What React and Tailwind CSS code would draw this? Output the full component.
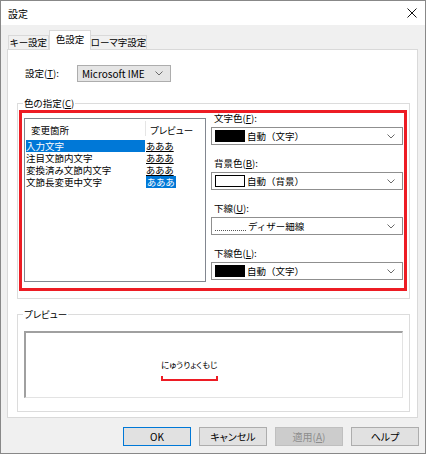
import React from 'react';

function Chevron() {
  return (
    <svg width="8" height="5" viewBox="0 0 8 5" className="shrink-0">
      <path d="M0.5 0.5 L4 4 L7.5 0.5" fill="none" stroke="#6a6a6a" strokeWidth="1" />
    </svg>
  );
}

function Key({ children }) {
  return <span className="underline underline-offset-1">{children}</span>;
}

function ColorField({ label, hotkey, swatch, text, first }) {
  return (
    <div className={first ? '' : 'mt-[13px]'}>
      <div className="h-[11px] pl-[3px] leading-[11px]">
        {label}(<Key>{hotkey}</Key>):
      </div>
      <div className="mt-[3px] flex h-[18px] items-center border border-[#8f8f8f] bg-white pl-[3px] pr-[7px]">
        {swatch}
        <span className="ml-[2px] flex-1 leading-[12px] [font-feature-settings:normal]">{text}</span>
        <Chevron />
      </div>
    </div>
  );
}

const rows = [
  { name: '入力文字', selected: true },
  { name: '注目文節内文字' },
  { name: '変換済み文節内文字' },
  { name: '文節長変更中文字', highlight: true },
];

function Button({ children, primary, disabled }) {
  return (
    <button
      className={
        'flex h-[19px] w-[68px] items-center justify-center border text-[10px] ' +
        (primary
          ? 'border-[#0078d7] bg-[#e1e1e1] text-black'
          : disabled
            ? 'border-[#bfbfbf] bg-[#cccccc] text-[#8d8d8d]'
            : 'border-[#adadad] bg-[#e1e1e1] text-black')
      }
    >
      {children}
    </button>
  );
}

export default function App() {
  return (
    <div className="flex h-[454px] w-[426px] flex-col border border-[#888888] bg-[#f0f0f0] font-['Noto_Sans_CJK_JP','Noto_Sans',sans-serif] text-[9.5px] text-black [font-feature-settings:'palt']">
      {/* title bar */}
      <div className="flex h-[24px] shrink-0 items-center justify-between bg-white pl-[7px] pr-[8px]">
        <span className="text-[10px]">設定</span>
        <svg width="10" height="10" viewBox="0 0 10 10">
          <path d="M0.5 0.5 L9.5 9.5 M9.5 0.5 L0.5 9.5" stroke="#111" strokeWidth="1" />
        </svg>
      </div>

      {/* tabs */}
      <div className="flex h-[24px] shrink-0 items-end pl-[7px]">
        <div className="flex h-[14px] w-[41px] items-center justify-center whitespace-nowrap border border-b-0 border-[#d9d9d9] bg-[#f0f0f0]">
          キー設定
        </div>
        <div className="relative z-10 -mb-px flex h-[20px] w-[42px] items-center justify-center whitespace-nowrap border border-b-0 border-[#d9d9d9] bg-white pb-[2px]">
          色設定
        </div>
        <div className="flex h-[14px] w-[56px] items-center justify-center whitespace-nowrap border border-b-0 border-l-0 border-[#d9d9d9] bg-[#f0f0f0]">
          ローマ字設定
        </div>
      </div>

      {/* tab panel */}
      <div className="ml-[6px] h-[369px] w-[411px] shrink-0 border border-[#d9d9d9] bg-white">
        <div className="mt-[15px] flex h-[17px] items-center">
          <span className="w-[69px] pl-[17px]">
            設定(<Key>T</Key>):
          </span>
          <div className="flex h-[17px] w-[94px] items-center justify-between border border-[#adadad] bg-[#e5e5e5] pl-[4px] pr-[7px] text-[10px]">
            <span>Microsoft IME</span>
            <Chevron />
          </div>
        </div>

        <fieldset className="ml-[9px] mt-[15px] w-[393px] border border-[#dcdcdc] pb-[7px] pl-[1px] pt-[1px]">
          <legend className="ml-[4px] px-[1px] leading-[12px]">
            色の指定(<Key>C</Key>)
          </legend>
          <div className="flex h-[181px] w-[388px] border-[3px] border-[#ed1c24] pl-[2px] pr-[1px]">
            <div className="mt-[5px] h-[164px] w-[182px] shrink-0 border border-[#828790] bg-white">
              <div className="flex h-[21px] items-start pt-[2px]">
                <div className="w-[120px] pl-[6px] pt-[4px] leading-[11px]">変更箇所</div>
                <div className="h-[15px] border-l border-[#e5e5e5] pl-[4px] pt-[4px] leading-[11px]">プレビュー</div>
              </div>
              {rows.map((r) => (
                <div key={r.name} className="flex h-[12px] leading-[12px]">
                  <div
                    className={
                      'ml-[1px] w-[119px] whitespace-nowrap ' +
                      (r.selected ? 'bg-[#0078d7] text-white' : '')
                    }
                  >
                    {r.name}
                  </div>
                  <div className="pl-px">
                    {r.highlight ? (
                      <span className="inline-block bg-[#0078d7] px-px text-white">あああ</span>
                    ) : (
                      <span className="underline underline-offset-1">あああ</span>
                    )}
                  </div>
                </div>
              ))}
            </div>

            <div className="ml-[5px] flex-1">
              <ColorField
                first
                label="文字色"
                hotkey="F"
                text="自動（文字）"
                swatch={<span className="h-[12px] w-[30px] bg-black" />}
              />
              <ColorField
                label="背景色"
                hotkey="B"
                text="自動（背景）"
                swatch={<span className="h-[12px] w-[30px] border border-black bg-white" />}
              />
              <ColorField
                label="下線"
                hotkey="U"
                text="ディザー細線"
                swatch={<span className="mb-[-3px] h-[6px] w-[31px] border-b border-dotted border-[#555]" />}
              />
              <ColorField
                label="下線色"
                hotkey="L"
                text="自動（文字）"
                swatch={<span className="h-[12px] w-[30px] bg-black" />}
              />
            </div>
          </div>
        </fieldset>

        <fieldset className="ml-[9px] mt-[9px] w-[393px] border border-[#dcdcdc] pb-[13px] pl-[6px]">
          <legend className="ml-[-1px] px-[1px] leading-[12px]">プレビュー</legend>
          <div className="mt-[11px] h-[67px] w-[379px] border-l-2 border-t-2 border-b border-r border-l-[#a0a0a0] border-t-[#a0a0a0] border-b-[#e3e3e3] border-r-[#e3e3e3] bg-white pl-[135px] pt-[24px]">
            <div className="inline-flex flex-col items-stretch">
              <span className="text-[8.5px] leading-[12px]">にゅうりょくもじ</span>
              <span className="mt-[6px] h-[5px] border-x-2 border-b-2 border-[#ed1c24]" />
            </div>
          </div>
        </fieldset>
      </div>

      {/* buttons */}
      <div className="mt-[9px] flex justify-end gap-[8px] pr-[6px]">
        <Button primary>OK</Button>
        <Button>キャンセル</Button>
        <Button disabled>
          適用(<Key>A</Key>)
        </Button>
        <Button>ヘルプ</Button>
      </div>
    </div>
  );
}
